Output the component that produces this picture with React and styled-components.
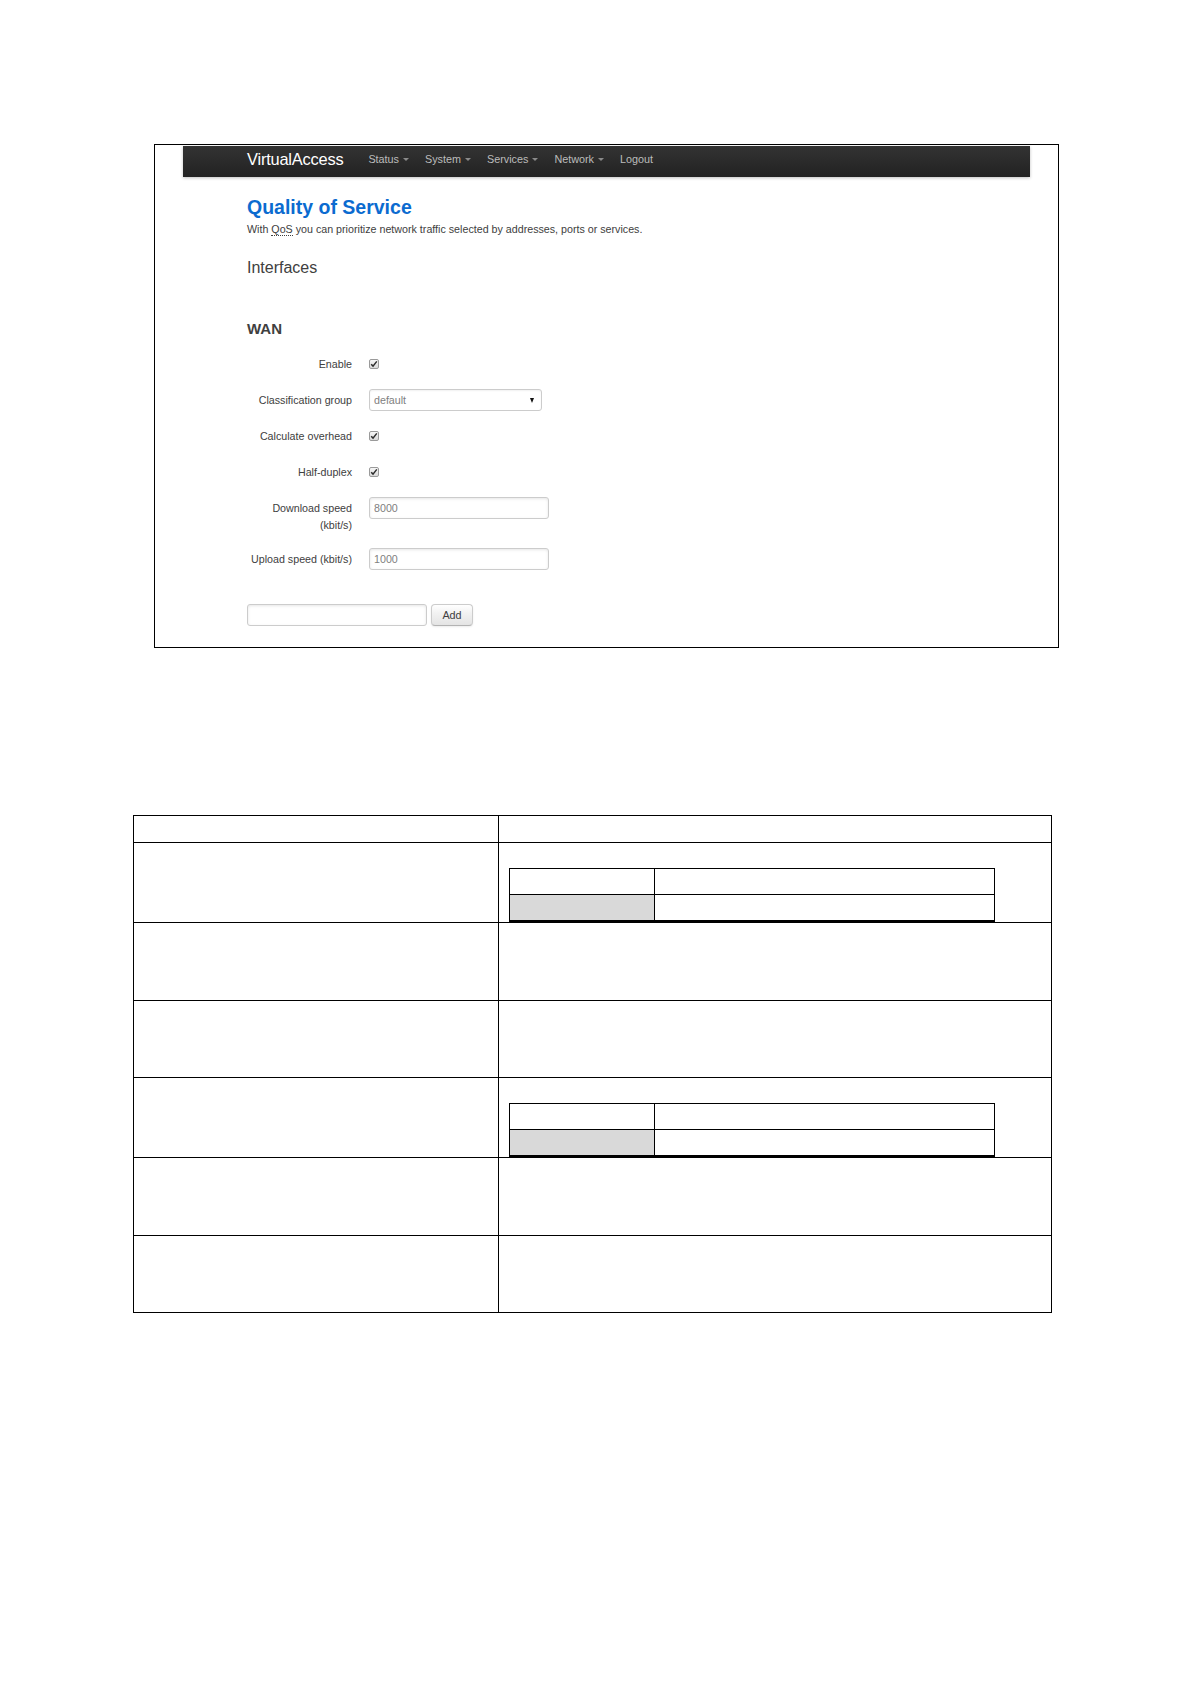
import React from 'react';
import styled, { createGlobalStyle } from 'styled-components';

const GlobalStyle = createGlobalStyle`
  html, body {
    margin: 0;
    padding: 0;
    background: #fff;
  }
  body {
    font-family: "Liberation Sans", Arial, sans-serif;
    color: #404040;
  }
`;

const Page = styled.div`
  width: 1191px;
  min-height: 1684px;
  padding-top: 144px;
  box-sizing: border-box;
`;

// screenshot frame
const Frame = styled.div`
  margin-left: 154px;
  width: 905px;
  box-sizing: border-box;
  border: 1px solid #000;
  padding: 1px 28px 21px;
`;

const TopBar = styled.div`
  height: 31px;
  box-sizing: border-box;
  background: linear-gradient(to bottom, #333 0%, #222 100%);
  box-shadow: 0 1px 3px rgba(0, 0, 0, 0.25);
  display: flex;
  align-items: center;
  padding: 0 0 5px 64px;
`;

const Brand = styled.span`
  font-size: 16.4px;
  color: #fff;
  margin-right: 25px;
  letter-spacing: -0.2px;
`;

const NavList = styled.div`
  display: flex;
  align-items: center;
  gap: 16px;
`;

const NavItem = styled.span`
  font-size: 10.8px;
  color: #bcbcbc;
  display: flex;
  align-items: center;
`;

const Caret = styled.span`
  display: inline-block;
  margin-left: 4px;
  margin-top: 1px;
  border-top: 3px solid #8a8a8a;
  border-left: 3px solid transparent;
  border-right: 3px solid transparent;
`;

const Content = styled.div`
  padding-left: 64px;
`;

const Title = styled.h1`
  margin: 20px 0 0;
  font-size: 19.5px;
  line-height: 20px;
  font-weight: bold;
  color: #0b6bd0;
`;

const Lead = styled.p`
  margin: 6px 0 0;
  font-size: 10.7px;
  line-height: 12px;
  color: #404040;
`;

const Abbr = styled.abbr`
  text-decoration: none;
  border-bottom: 1px dotted #404040;
`;

const SectionTitle = styled.h2`
  margin: 23px 0 0;
  font-size: 16px;
  line-height: 20px;
  font-weight: normal;
  color: #404040;
`;

const GroupTitle = styled.h3`
  margin: 42px 0 15px;
  font-size: 15px;
  line-height: 18px;
  font-weight: bold;
  color: #404040;
`;

const Fields = styled.div`
  display: flex;
  flex-direction: column;
  gap: 14px;
`;

const FieldRow = styled.div`
  display: grid;
  grid-template-columns: 105px 1fr;
  column-gap: 17px;
  align-items: ${(p) => (p.$wrap ? 'start' : 'center')};
  min-height: 22px;
`;

const Label = styled.label`
  text-align: right;
  font-size: 10.7px;
  line-height: ${(p) => (p.$wrap ? '17px' : '14px')};
  padding-top: ${(p) => (p.$wrap ? '3px' : '0')};
  color: #404040;
`;

const CheckBox = styled.span`
  width: 10px;
  height: 10px;
  box-sizing: border-box;
  border: 1px solid #9a9a9a;
  border-radius: 2px;
  background: linear-gradient(to bottom, #f6f6f6, #d9d9d9);
  display: flex;
  align-items: center;
  justify-content: center;
`;

const SelectBox = styled.div`
  width: 173px;
  height: 22px;
  box-sizing: border-box;
  border: 1px solid #ccc;
  border-radius: 3px;
  display: flex;
  align-items: center;
  justify-content: space-between;
  padding: 0 7px 0 4px;
  font-size: 10.7px;
  color: #808080;
  box-shadow: inset 0 1px 2px rgba(0, 0, 0, 0.06);
`;

const SelectArrow = styled.span`
  display: inline-block;
  border-top: 5px solid #111;
  border-left: 2.5px solid transparent;
  border-right: 2.5px solid transparent;
`;

const TextInput = styled.input`
  width: ${(p) => p.$w || 180}px;
  height: 22px;
  box-sizing: border-box;
  border: 1px solid #ccc;
  border-radius: 3px;
  padding: 0 4px;
  margin: 0;
  font-family: "Liberation Sans", Arial, sans-serif;
  font-size: 10.7px;
  color: #808080;
  background: #fff;
  box-shadow: inset 0 1px 3px rgba(0, 0, 0, 0.1);
  outline: none;
`;

const AddRow = styled.div`
  display: flex;
  gap: 4px;
  margin-top: 34px;
`;

const Button = styled.button`
  width: 42px;
  height: 22px;
  margin: 0;
  padding: 0;
  border: 1px solid #ccc;
  border-bottom-color: #b3b3b3;
  border-radius: 4px;
  background: linear-gradient(to bottom, #fff 0%, #f2f2f2 40%, #e4e4e4 100%);
  box-shadow: 0 1px 2px rgba(0, 0, 0, 0.08);
  font-family: "Liberation Sans", Arial, sans-serif;
  font-size: 10.8px;
  color: #404040;
`;

// empty document table below the screenshot
const DocTable = styled.table`
  margin: 167px 0 0 133px;
  width: 919px;
  border-collapse: collapse;
  table-layout: fixed;
`;

const DocRow = styled.tr`
  height: ${(p) => p.$h}px;
`;

const DocCell = styled.td`
  border: 1px solid #000;
  padding: 0;
  vertical-align: bottom;
`;

const NestCell = styled.td`
  border: 1px solid #000;
  padding: 0 0 0 10px;
  vertical-align: bottom;
`;

const NestTable = styled.table`
  width: 486px;
  border-collapse: collapse;
  table-layout: fixed;
  border-bottom: 2px solid #000;
`;

const NestTd = styled.td`
  height: 25px;
  padding: 0;
  border: 1px solid #000;
  background: ${(p) => (p.$shade ? '#d9d9d9' : '#fff')};
`;

function Check() {
  return (
    <CheckBox>
      <svg width="8" height="8" viewBox="0 0 8 8">
        <path d="M1.2 4.3 L3 6.1 L6.8 1.4" fill="none" stroke="#2b2b2b" strokeWidth="1.5" />
      </svg>
    </CheckBox>
  );
}

function NestedGrid() {
  return (
    <NestTable>
      <colgroup>
        <col style={{ width: 145 }} />
        <col />
      </colgroup>
      <tbody>
        <tr>
          <NestTd />
          <NestTd />
        </tr>
        <tr>
          <NestTd $shade />
          <NestTd />
        </tr>
      </tbody>
    </NestTable>
  );
}

const navItems = ['Status', 'System', 'Services', 'Network'];

const docRows = [
  { h: 27, nested: false },
  { h: 80, nested: true },
  { h: 78, nested: false },
  { h: 77, nested: false },
  { h: 80, nested: true },
  { h: 78, nested: false },
  { h: 77, nested: false },
];

export default function App() {
  return (
    <>
      <GlobalStyle />
      <Page>
        <Frame>
          <TopBar>
            <Brand>VirtualAccess</Brand>
            <NavList>
              {navItems.map((item) => (
                <NavItem key={item}>
                  {item}
                  <Caret />
                </NavItem>
              ))}
              <NavItem>Logout</NavItem>
            </NavList>
          </TopBar>

          <Content>
            <Title>Quality of Service</Title>
            <Lead>
              With <Abbr title="Quality of Service">QoS</Abbr> you can prioritize network traffic
              selected by addresses, ports or services.
            </Lead>

            <SectionTitle>Interfaces</SectionTitle>
            <GroupTitle>WAN</GroupTitle>

            <Fields>
              <FieldRow>
                <Label>Enable</Label>
                <Check />
              </FieldRow>
              <FieldRow>
                <Label>Classification group</Label>
                <SelectBox>
                  <span>default</span>
                  <SelectArrow />
                </SelectBox>
              </FieldRow>
              <FieldRow>
                <Label>Calculate overhead</Label>
                <Check />
              </FieldRow>
              <FieldRow>
                <Label>Half-duplex</Label>
                <Check />
              </FieldRow>
              <FieldRow $wrap>
                <Label $wrap>Download speed (kbit/s)</Label>
                <TextInput defaultValue="8000" />
              </FieldRow>
              <FieldRow>
                <Label>Upload speed (kbit/s)</Label>
                <TextInput defaultValue="1000" />
              </FieldRow>
            </Fields>

            <AddRow>
              <TextInput $w={180} defaultValue="" />
              <Button>Add</Button>
            </AddRow>
          </Content>
        </Frame>

        <DocTable>
          <colgroup>
            <col style={{ width: 365 }} />
            <col />
          </colgroup>
          <tbody>
            {docRows.map((row, i) => (
              <DocRow key={i} $h={row.h}>
                <DocCell />
                {row.nested ? (
                  <NestCell>
                    <NestedGrid />
                  </NestCell>
                ) : (
                  <DocCell />
                )}
              </DocRow>
            ))}
          </tbody>
        </DocTable>
      </Page>
    </>
  );
}
